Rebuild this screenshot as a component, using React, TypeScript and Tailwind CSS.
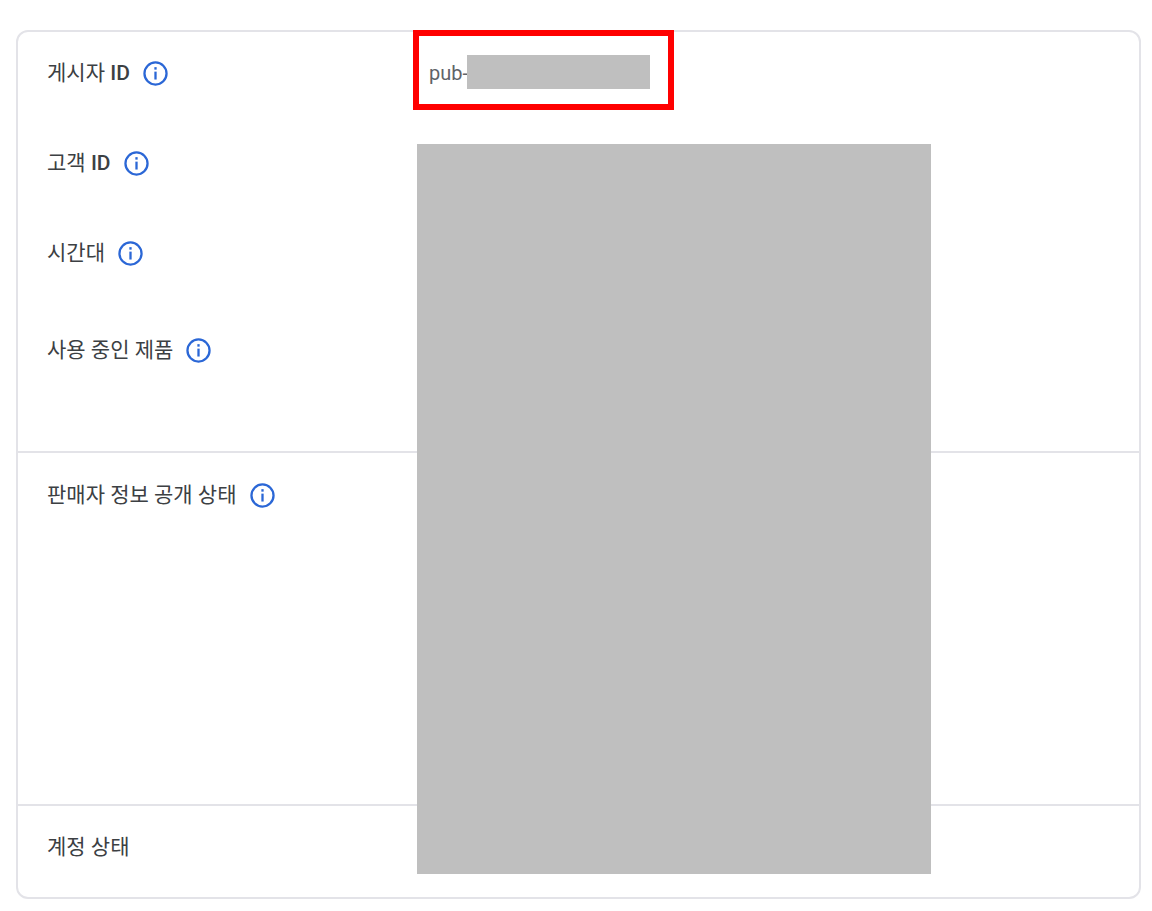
import type { ReactNode } from 'react'

interface InfoRowProps {
  label: string
  suffix?: string
  help?: boolean
  children?: ReactNode
}

function InfoIcon() {
  return (
    <svg viewBox="0 0 24 24" className="h-full w-full" fill="none" aria-hidden="true">
      <circle cx="12" cy="12" r="10.6" stroke="currentColor" strokeWidth="2.2" />
      <rect x="10.9" y="5.9" width="2.2" height="2.4" fill="currentColor" />
      <rect x="10.9" y="10.2" width="2.2" height="7.6" fill="currentColor" />
    </svg>
  )
}

function InfoRow({ label, suffix, help = true, children }: InfoRowProps) {
  const name = suffix ? `${label} ${suffix}` : label

  return (
    <div className="flex h-8 items-center">
      <dt className="flex w-[382px] shrink-0 items-center gap-[13px]">
        <span className="pb-px text-[21px] leading-7 text-[#3c4043]">
          {label}
          {suffix && <span className="font-medium"> {suffix}</span>}
        </span>
        {help && (
          <button type="button" aria-label={`${name} 도움말`} className="h-[25px] w-[25px] text-[#2b67d6]">
            <InfoIcon />
          </button>
        )}
      </dt>
      <dd className="flex items-center text-xl text-[#5f6368]">{children}</dd>
    </div>
  )
}

export default function App() {
  return (
    <main className="bg-white pt-[30px] pr-[11px] pb-3 pl-4 font-[Roboto,'Noto_Sans_CJK_KR',sans-serif]">
      <div className="relative rounded-xl border-2 border-[#e3e3e8]">
        <dl className="px-[29px] pt-[25px] pb-[85px]">
          <InfoRow label="게시자" suffix="ID">
            <span>pub-</span>
            <span className="mb-0.5 -ml-px h-[34px] w-[183px] bg-[#bfbfbf]" />
          </InfoRow>
          <div className="mt-[58px]">
            <InfoRow label="고객" suffix="ID" />
          </div>
          <div className="mt-[58px]">
            <InfoRow label="시간대" />
          </div>
          <div className="mt-[65px]">
            <InfoRow label="사용 중인 제품" />
          </div>
        </dl>

        <dl className="border-t-2 border-[#e3e3e8] px-[29px] pt-[26px] pb-[293px]">
          <InfoRow label="판매자 정보 공개 상태" />
        </dl>

        <dl className="border-t-2 border-[#e3e3e8] px-[29px] pt-[25px] pb-[34px]">
          <InfoRow label="계정 상태" help={false} />
        </dl>

        {/* highlight around the publisher ID */}
        <div className="absolute -top-0.5 left-[395px] h-20 w-[261px] border-6 border-[#ff0000]" />

        {/* mask over the private values */}
        <div className="absolute top-28 left-[399px] h-[730px] w-[514px] bg-[#bfbfbf]" />
      </div>
    </main>
  )
}
